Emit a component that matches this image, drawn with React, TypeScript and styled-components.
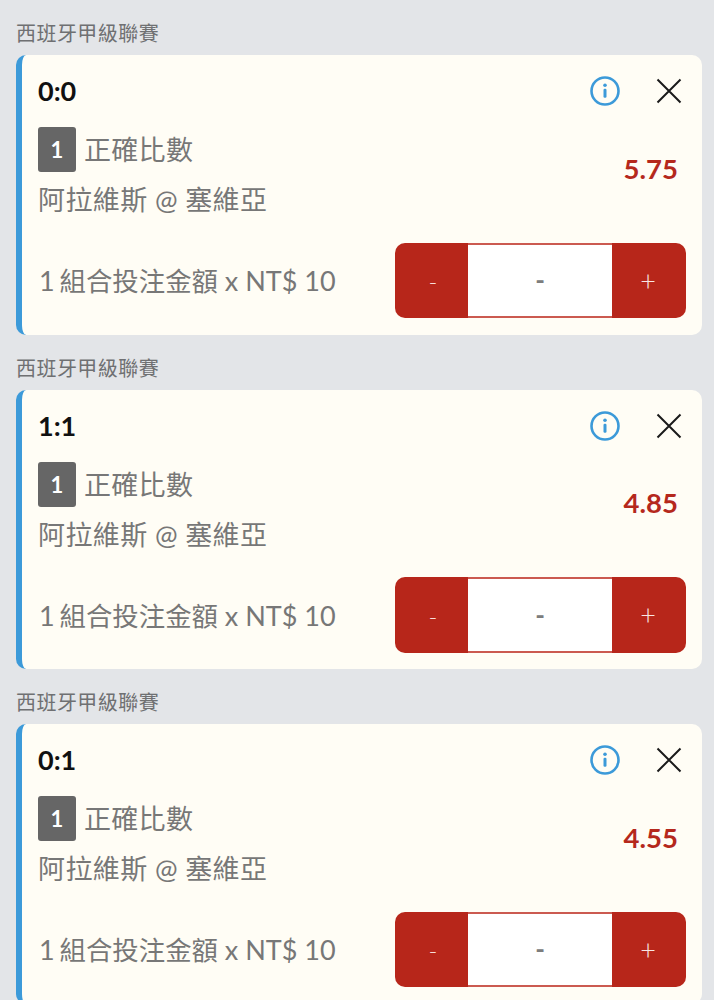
import React from 'react';
import styled, { createGlobalStyle } from 'styled-components';

const GlobalStyle = createGlobalStyle`
  html, body {
    margin: 0;
    padding: 0;
    background: #e3e5e8;
    overflow: hidden;
  }
  body {
    font-family: Lato, "Noto Sans CJK TC", sans-serif;
  }
`;

const bets = [
  { score: '0:0', odds: '5.75' },
  { score: '1:1', odds: '4.85' },
  { score: '0:1', odds: '4.55' },
];

function InfoIcon() {
  return (
    <svg width="32" height="32" viewBox="0 0 32 32" fill="none">
      <circle cx="16" cy="16" r="13.5" stroke="#3c9ad9" strokeWidth="2.6" />
      <circle cx="16" cy="10.2" r="1.8" fill="#3c9ad9" />
      <rect x="14.5" y="13.8" width="3" height="9" rx="1.2" fill="#3c9ad9" />
    </svg>
  );
}

function CloseIcon() {
  return (
    <svg width="26" height="26" viewBox="0 0 26 26" fill="none">
      <path d="M1.5 1.5L24.5 24.5M24.5 1.5L1.5 24.5" stroke="#1a1a1a" strokeWidth="2" />
    </svg>
  );
}

function App() {
  return (
    <Page>
      <GlobalStyle />
      {bets.map((bet) => (
        <Section key={bet.score}>
          <League>西班牙甲級聯賽</League>
          <Card>
            <TopRow>
              <Score>{bet.score}</Score>
              <Icons>
                <InfoIcon />
                <CloseIcon />
              </Icons>
            </TopRow>
            <MiddleRow>
              <Details>
                <MarketRow>
                  <Badge>1</Badge>
                  <Market>正確比數</Market>
                </MarketRow>
                <Teams>阿拉維斯 @ 塞維亞</Teams>
              </Details>
              <Odds>{bet.odds}</Odds>
            </MiddleRow>
            <StakeRow>
              <StakeLabel>
                1 <StakeCjk>組合投注金額</StakeCjk> x NT$ 10
              </StakeLabel>
              <Stepper>
                <MinusButton>-</MinusButton>
                <StepValue>-</StepValue>
                <PlusButton>+</PlusButton>
              </Stepper>
            </StakeRow>
          </Card>
        </Section>
      ))}
    </Page>
  );
}

export default App;

const Page = styled.div`
  width: 714px;
  height: 1000px;
  overflow: hidden;
`;

const Section = styled.div`
  padding: 0 12px 0 16px;
`;

const League = styled.div`
  height: 55px;
  box-sizing: border-box;
  padding-top: 20px;
  font-size: 20px;
  line-height: 26px;
  letter-spacing: 0.45px;
  color: #6f7072;
`;

const Card = styled.div`
  height: 279.5px;
  box-sizing: border-box;
  background: #fffdf5;
  border-left: 6px solid #3c9ad9;
  border-radius: 10px;
  padding: 20px 16px 16.5px 16px;
  display: flex;
  flex-direction: column;
`;

const TopRow = styled.div`
  height: 32px;
  display: flex;
  align-items: center;
  justify-content: space-between;
`;

const Score = styled.div`
  font-size: 27px;
  font-weight: 700;
  line-height: 30px;
  color: #111;
`;

const Icons = styled.div`
  display: flex;
  align-items: center;
  gap: 35px;
  padding-right: 4px;
`;

const MiddleRow = styled.div`
  margin-top: 20px;
  display: flex;
  align-items: center;
  justify-content: space-between;
`;

const Details = styled.div`
  display: flex;
  flex-direction: column;
`;

const MarketRow = styled.div`
  display: flex;
  align-items: center;
  gap: 8px;
`;

const Badge = styled.div`
  width: 38px;
  height: 45px;
  background: #666;
  border-radius: 3px;
  color: #fff;
  font-size: 22px;
  font-weight: 700;
  display: flex;
  align-items: center;
  justify-content: center;
`;

const Market = styled.div`
  font-size: 27px;
  line-height: 40px;
  padding-top: 1px;
  letter-spacing: 0.3px;
  color: #777;
`;

const Teams = styled.div`
  margin-top: 9px;
  font-size: 27px;
  line-height: 38px;
  letter-spacing: 0.4px;
  color: #777;
`;

const Odds = styled.div`
  font-size: 27.5px;
  font-weight: 700;
  color: #b5281c;
  padding-right: 8px;
  padding-bottom: 10px;
`;

const StakeRow = styled.div`
  margin-top: auto;
  display: flex;
  align-items: center;
  justify-content: space-between;
`;

const StakeLabel = styled.div`
  font-size: 27px;
  line-height: 34px;
  padding: 2px 0 0 1px;
  color: #777;
`;

const StakeCjk = styled.span`
  font-size: 26.4px;
  margin-left: -2px;
`;

const Stepper = styled.div`
  width: 291px;
  height: 75.5px;
  display: flex;
  background: #b7261a;
  border-radius: 10px;
  overflow: hidden;
`;

const MinusButton = styled.div`
  width: 73px;
  box-sizing: border-box;
  padding: 3px 0 0 3px;
  display: flex;
  align-items: center;
  justify-content: center;
  color: #f7dcd9;
  font-size: 24px;
  font-weight: 300;
`;

const PlusButton = styled.div`
  width: 74px;
  box-sizing: border-box;
  padding-right: 2px;
  display: flex;
  align-items: center;
  justify-content: center;
  color: #f8e6e4;
  font-size: 27px;
  font-weight: 300;
`;

const StepValue = styled.div`
  width: 144px;
  box-sizing: border-box;
  background: #fff;
  border-top: 2px solid #cb5a50;
  border-bottom: 2px solid #cb5a50;
  display: flex;
  align-items: center;
  justify-content: center;
  color: #7d7d7d;
  font-size: 26px;
  font-weight: 700;
`;
